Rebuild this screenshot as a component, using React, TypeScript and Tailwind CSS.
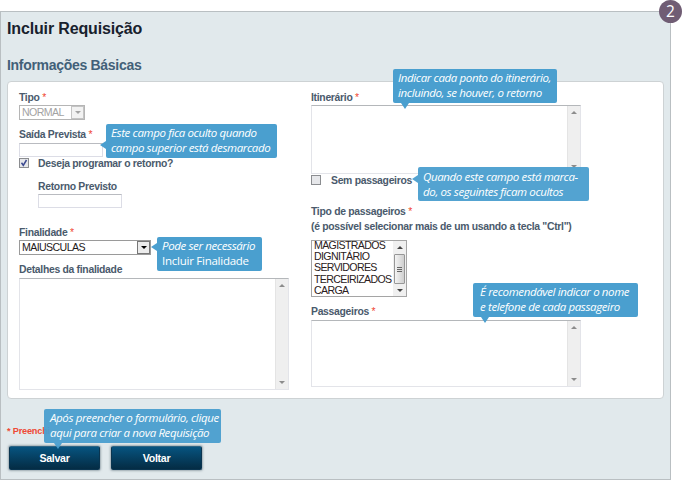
import type { ReactNode } from "react";
import clsx from "clsx";

function Label({ children, required, className }: { children: ReactNode; required?: boolean; className?: string }) {
  return (
    <div className={clsx("h-3 whitespace-nowrap text-[10.4px] leading-[14px] font-bold tracking-[-0.3px] text-[#4a5a6c]", className)}>
      {children}
      {required && <span className="font-normal text-[#f0452f]"> *</span>}
    </div>
  );
}

function Triangle({ up, className }: { up?: boolean; className?: string }) {
  return (
    <svg viewBox="0 0 6 3" className={clsx("h-[3px] w-[6px]", className)} fill="currentColor">
      <path d={up ? "M3 0 6 3H0z" : "M0 0h6L3 3z"} />
    </svg>
  );
}

function TextArea({ className }: { className?: string }) {
  return (
    <div className={clsx("flex w-[270px] justify-end border border-[#e3e4e9] border-t-[#b4b7ba] bg-white", className)}>
      <div className="flex w-[13px] flex-col items-center justify-between border-l border-[#e4e4e4] bg-[#efefef] py-[5px] text-[#8c8c8c]">
        <Triangle up />
        <Triangle />
      </div>
    </div>
  );
}

function Input({ className }: { className?: string }) {
  return <div className={clsx("h-[14px] w-[84px] border border-[#dcdde6] border-t-[#b9bbc0] bg-white", className)} />;
}

function Checkbox({ checked }: { checked?: boolean }) {
  return (
    <div className="flex h-[10px] w-[10px] items-center justify-center border border-[#8b8d90] bg-[#e6e7ea]">
      {checked && (
        <svg viewBox="0 0 8 8" className="h-2 w-2" fill="none" stroke="#3c4a90" strokeWidth="1.5">
          <path d="M1.5 3.8 3.3 6.3 6.5 1" />
        </svg>
      )}
    </div>
  );
}

function Button({ children }: { children: ReactNode }) {
  return (
    <div className="flex h-[24px] w-[91px] items-center justify-center rounded-[2px] border border-[#0a3550] border-t-[#2d6484] bg-linear-to-b from-[#075480] to-[#042c44] pt-px text-[10.6px] font-bold tracking-[-0.3px] text-white shadow-[0_0_2px_1px_rgba(90,110,120,0.5)]">
      {children}
    </div>
  );
}

function Tip({
  lines,
  arrow,
  className,
  arrowClass,
}: {
  lines: ReactNode[];
  arrow: "left" | "down";
  className: string;
  arrowClass: string;
}) {
  return (
    <div className={clsx("absolute h-[34px] rounded-[2px] bg-[#4a9fcf] font-['Open_Sans','Noto_Sans',sans-serif] text-[11.5px] leading-[14.5px] tracking-[-0.37px] text-white italic", className)}>
      {lines.map((line, i) => (
        <div key={i} className="whitespace-nowrap">
          {line}
        </div>
      ))}
      {arrow === "left" ? (
        <svg viewBox="0 0 6 8" className={clsx("absolute -left-[6px] h-2 w-[6px]", arrowClass)}>
          <path d="M6 0v8L0 4z" fill="#4a9fcf" />
        </svg>
      ) : (
        <svg viewBox="0 0 8 6" className={clsx("absolute top-full h-[6px] w-2", arrowClass)}>
          <path d="M0 0h8L4 6z" fill="#4a9fcf" />
        </svg>
      )}
    </div>
  );
}

const passengerTypes = ["MAGISTRADOS", "DIGNITÁRIO", "SERVIDORES", "TERCEIRIZADOS", "CARGA"];

export default function App() {
  return (
    <div className="relative h-[480px] w-[682px] overflow-hidden bg-white pt-[11px] font-['Liberation_Sans',Arial,sans-serif]">
      <main className="h-[469px] w-[671px] border border-[#b9bfc2] bg-[#e1e9ec] pl-[6px]">
        <h1 className="mt-[6px] h-5 text-[16px] leading-[22px] font-bold tracking-[-0.15px] text-[#18212d]">Incluir Requisição</h1>
        <h2 className="mt-[18px] h-4 text-[14px] leading-[19px] font-bold tracking-[-0.3px] text-[#426078]">Informações Básicas</h2>

        <section className="mt-[9px] flex h-[318px] w-[657px] rounded-[4px] border border-[#cdd2d4] bg-white pt-[9px] pl-[11px]">
          <div className="w-[292px]">
            <Label required>Tipo</Label>
            <div className="mt-[2px] flex h-[15px] w-[66px] border border-[#b5b5b5] text-[#a3a3a3]">
              <span className="flex-1 pl-[2px] text-[10.6px] leading-[13px] tracking-[-0.6px]">NORMAL</span>
              <span className="flex w-[13px] items-center justify-center border border-[#c4c4c4] bg-[#f2f2f2]">
                <Triangle />
              </span>
            </div>
            <Label required className="mt-2">Saída Prevista</Label>
            <Input className="mt-[3px]" />
            <div className="mt-px flex h-[10px] items-center gap-[9px]">
              <Checkbox checked />
              <Label>Deseja programar o retorno?</Label>
            </div>
            <div className="pl-[19px]">
              <Label className="mt-3">Retorno Previsto</Label>
              <Input className="mt-[2px]" />
            </div>
            <Label required className="mt-[18px]">Finalidade</Label>
            <div className="mt-[2px] flex h-[15px] w-[132px] border border-[#9a9a9a] text-[#1e1a1a]">
              <span className="flex-1 pl-[2px] text-[10.6px] leading-[13px] tracking-[-0.6px]">MAIUSCULAS</span>
              <span className="flex w-[13px] items-center justify-center border border-[#777] bg-[#ececec] text-black">
                <Triangle />
              </span>
            </div>
            <Label className="mt-2">Detalhes da finalidade</Label>
            <TextArea className="mt-[3px] h-[112px]" />
          </div>

          <div>
            <Label required>Itinerário</Label>
            <TextArea className="mt-[2px] h-[69px]" />
            <div className="mt-px flex h-[10px] items-center gap-[10px]">
              <Checkbox />
              <Label>Sem passageiros</Label>
            </div>
            <Label required className="mt-5">Tipo de passageiros</Label>
            <Label className="mt-[3px]">(é possível selecionar mais de um usando a tecla "Ctrl")</Label>
            <div className="mt-2 flex h-[57px] w-[96px] overflow-hidden border border-[#a5a5a5] text-[#2a2020]">
              <ul className="-mt-px w-[81px] pl-[2px] text-[10.6px] leading-[11.2px] tracking-[-0.65px]">
                {passengerTypes.map((type) => (
                  <li key={type} className="whitespace-nowrap">{type}</li>
                ))}
              </ul>
              <div className="flex w-[13px] flex-col items-center bg-[#f0f0f0] text-[#444]">
                <Triangle up className="mt-[5px]" />
                <div className="mt-[5px] flex h-[30px] w-[11px] flex-col items-center justify-center gap-px rounded-[1px] border border-[#979797] bg-linear-to-r from-[#f4f4f4] to-[#cfcfcf]">
                  <i className="h-px w-[5px] bg-[#666]" />
                  <i className="h-px w-[5px] bg-[#666]" />
                  <i className="h-px w-[5px] bg-[#666]" />
                </div>
                <Triangle className="mt-[5px]" />
              </div>
            </div>
            <Label required className="mt-2">Passageiros</Label>
            <TextArea className="mt-[3px] h-[67px]" />
          </div>
        </section>

        <p className="mt-[26px] h-3 text-[9.2px] leading-3 font-bold tracking-[-0.2px] text-[#ee4a36]">* Preenchi</p>
        <div className="mt-[9px] flex gap-[11px] pl-[2px]">
          <Button>Salvar</Button>
          <Button>Voltar</Button>
        </div>
      </main>

      <Tip
        arrow="left"
        className="top-[124px] left-[106px] w-[171px] pt-[2px] pl-[5px]"
        arrowClass="top-[17px]"
        lines={["Este campo fica oculto quando", "campo superior está desmarcado"]}
      />
      <Tip
        arrow="down"
        className="top-[69px] left-[393px] w-[164px] pt-[2px] pl-[5px]"
        arrowClass="left-[8px]"
        lines={["Indicar cada ponto do itinerário,", "incluindo, se houver, o retorno"]}
      />
      <Tip
        arrow="left"
        className="top-[167px] left-[418px] w-[171px] pt-[3px] pl-[5px] opacity-95"
        arrowClass="top-[8px]"
        lines={["Quando este campo está marca-", "do, os seguintes ficam ocultos"]}
      />
      <Tip
        arrow="left"
        className="top-[237px] left-[157px] w-[105px] pt-[2px] pl-[5px]"
        arrowClass="top-[6px]"
        lines={["Pode ser necessário", <span className="tracking-[-0.25px] not-italic">Incluir Finalidade</span>]}
      />
      <Tip
        arrow="down"
        className="top-[283px] left-[473px] w-[165px] pt-[2px] pl-[7px]"
        arrowClass="left-[8px]"
        lines={["É recomendável indicar o nome", "e telefone de cada passageiro"]}
      />
      <Tip
        arrow="down"
        className="top-[409px] left-[44px] w-[177px] pt-[2px] pl-[6px] opacity-95"
        arrowClass="left-[10px]"
        lines={["Após preencher o formulário, clique", "aqui para criar a nova Requisição"]}
      />

      <div className="absolute top-0 left-[659px] flex h-[23px] w-[23px] items-center justify-center rounded-full bg-[#705d74] pt-px font-['Open_Sans',sans-serif] text-[15.5px] leading-none text-white">
        2
      </div>
    </div>
  );
}
